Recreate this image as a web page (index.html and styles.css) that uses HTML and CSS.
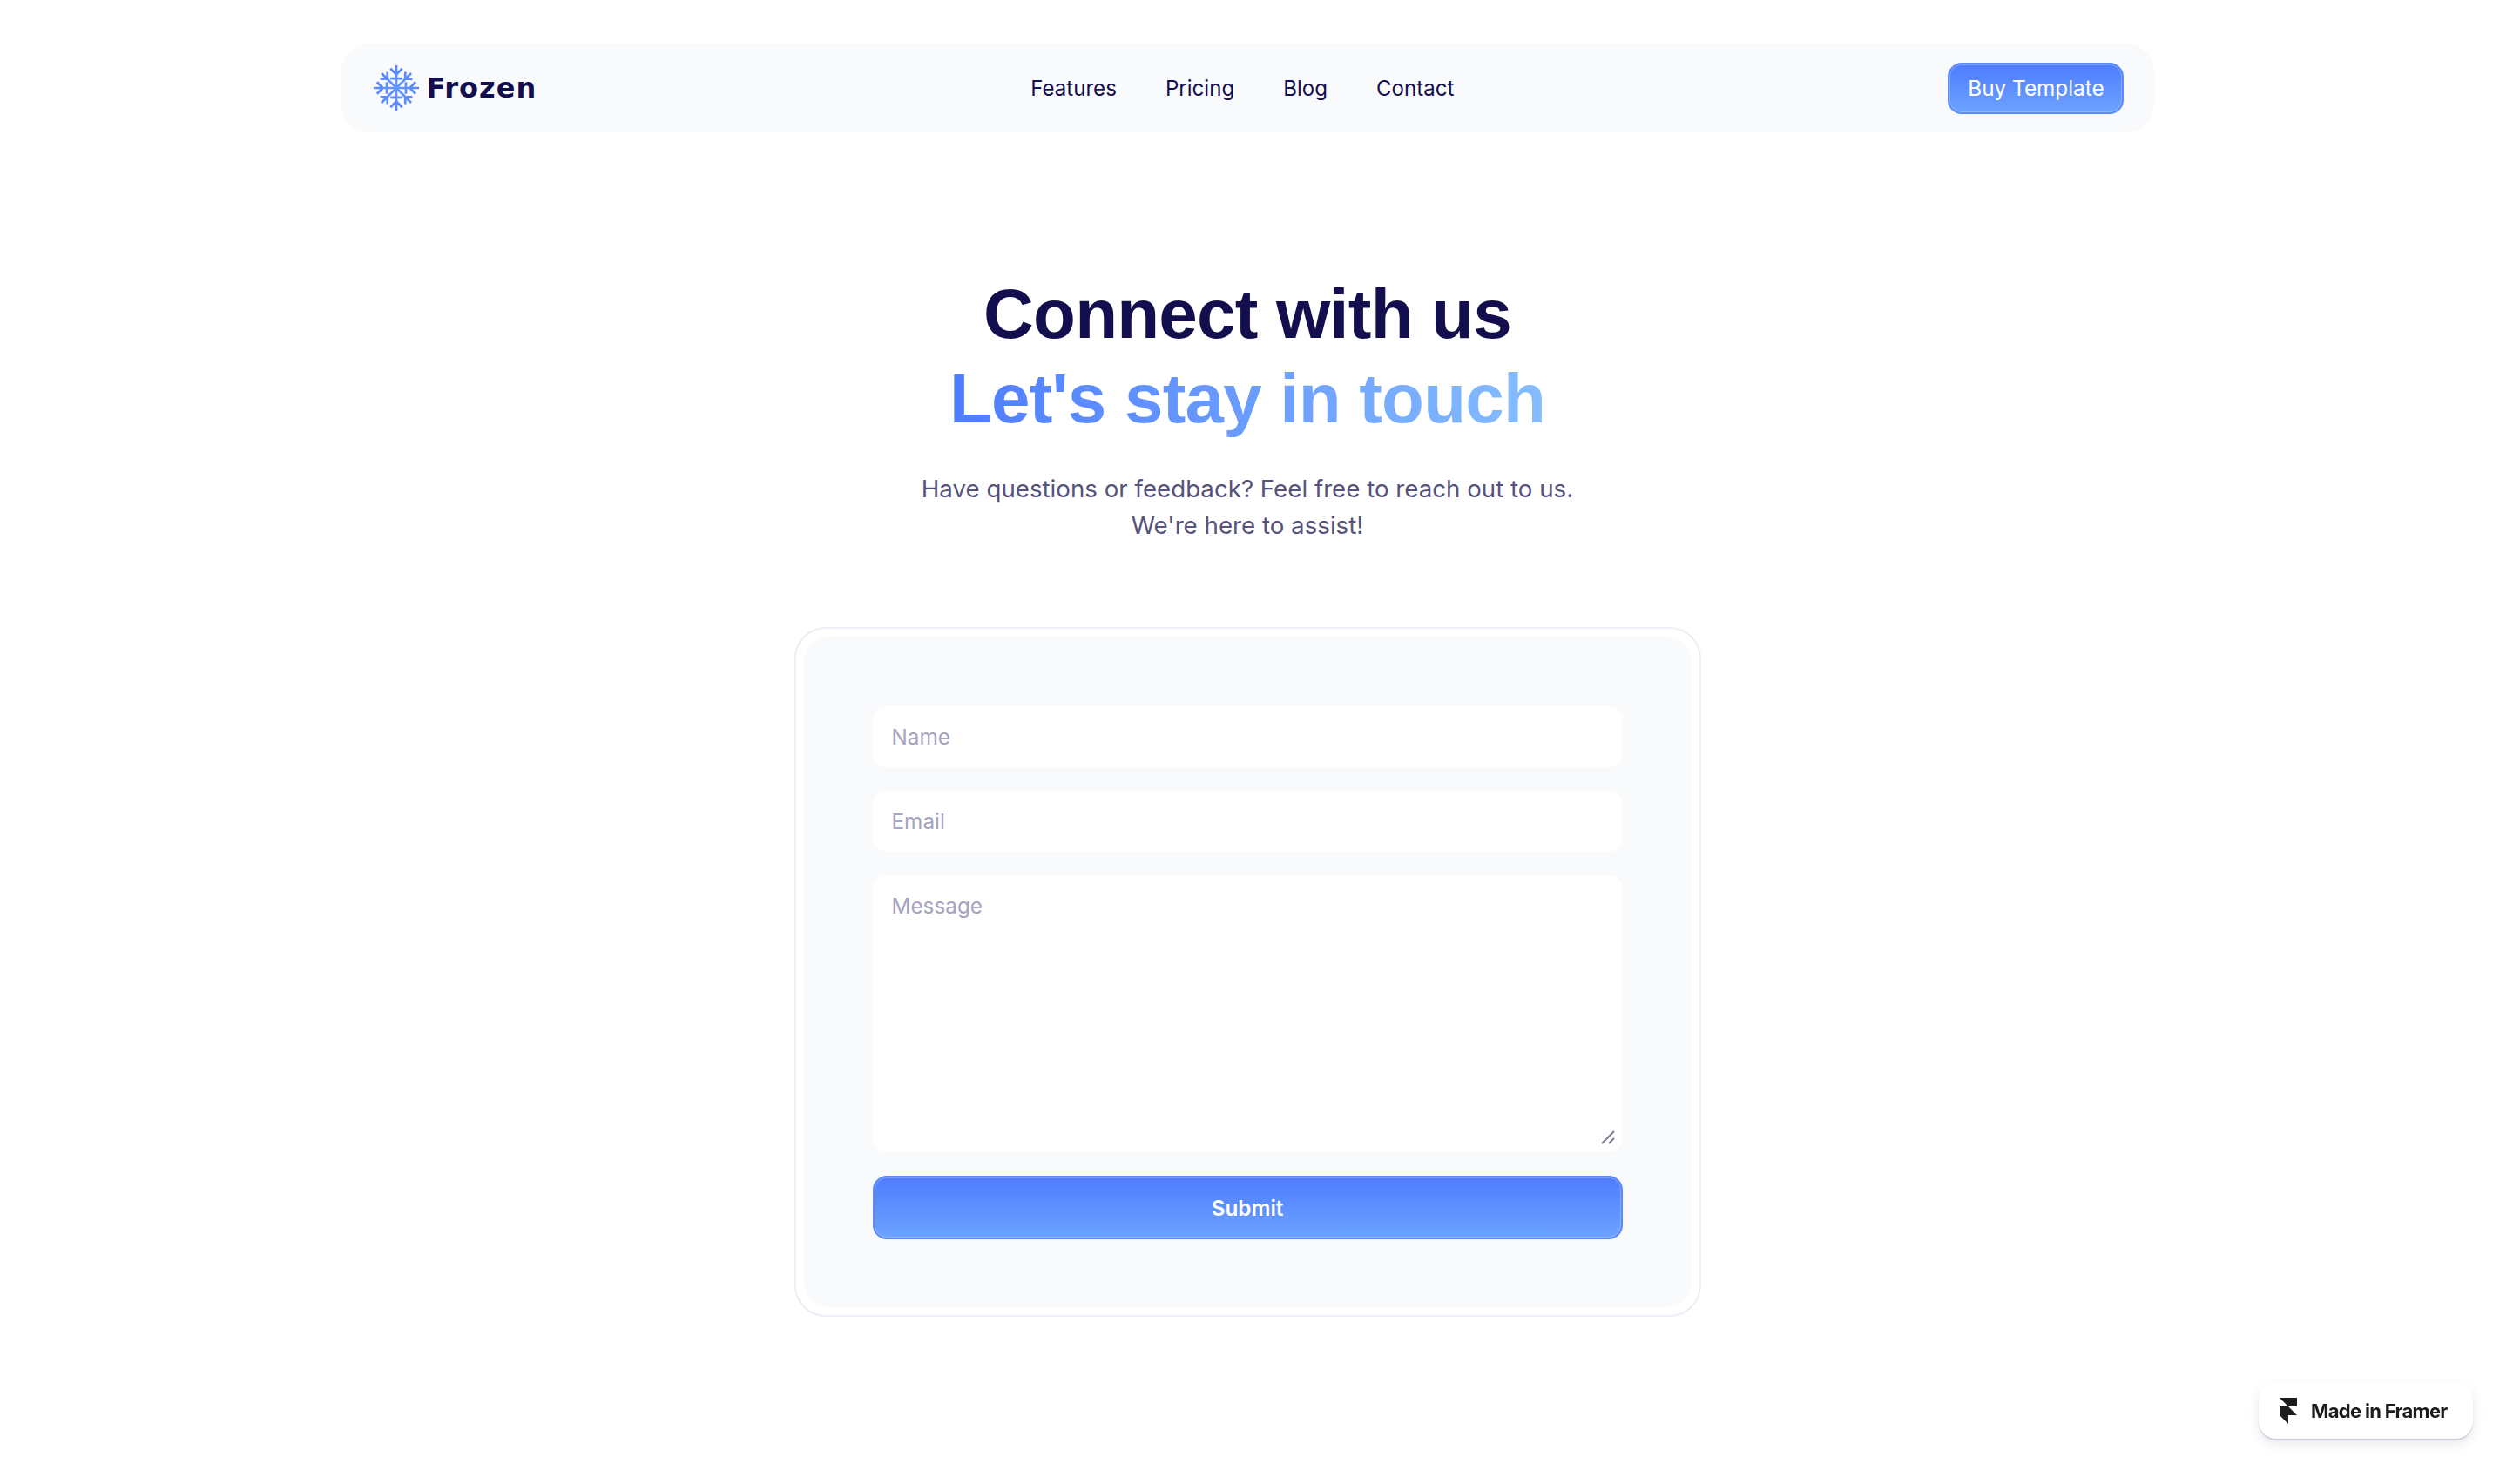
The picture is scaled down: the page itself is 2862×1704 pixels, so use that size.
FILE: index.html
```html
<!DOCTYPE html>
<html lang="en">

<head>
  <meta charset="UTF-8">
  <meta name="viewport" content="width=device-width, initial-scale=1.0">
  <title>Frozen - Contact</title>
  <link rel="stylesheet" href="styles.css">
</head>

<body>
  <div class="container">
    <nav class="navbar">
      <a class="logo" href="#">
        <svg class="logoIcon" viewBox="-28 -28 56 56" fill="none" stroke="url(#flake)" stroke-width="2.8">
          <defs>
            <linearGradient id="flake" gradientUnits="userSpaceOnUse" x1="-20" y1="-28" x2="20" y2="28">
              <stop offset="0" stop-color="#4f7cff" />
              <stop offset="1" stop-color="#7ab2ff" />
            </linearGradient>
            <path id="spoke" d="M0 0V-27M-7 -23L0 -16L7 -23" />
            <path id="spokeShort" d="M0 0V-25M-6 -21L0 -15L6 -21M-8 -8L-3 -13M8 -8L3 -13" />
          </defs>
          <use href="#spoke" />
          <use href="#spokeShort" transform="rotate(45)" />
          <use href="#spoke" transform="rotate(90)" />
          <use href="#spokeShort" transform="rotate(135)" />
          <use href="#spoke" transform="rotate(180)" />
          <use href="#spokeShort" transform="rotate(225)" />
          <use href="#spoke" transform="rotate(270)" />
          <use href="#spokeShort" transform="rotate(315)" />
        </svg>
        <span>Frozen</span>
      </a>
      <div class="links">
        <a href="#">Features</a>
        <a href="#">Pricing</a>
        <a href="#">Blog</a>
        <a href="#">Contact</a>
      </div>
      <a class="buyBtn" href="#">Buy Template</a>
    </nav>

    <div class="hero">
      <h1>Connect with us<br><span class="gradientText">Let's stay in touch</span></h1>
      <p>Have questions or feedback? Feel free to reach out to us.<br>We're here to assist!</p>
    </div>

    <div class="formFrame">
      <form class="contactForm">
        <input type="text" placeholder="Name">
        <input type="email" placeholder="Email">
        <div class="messageBox">
          <textarea placeholder="Message"></textarea>
          <svg class="resizeGrip" viewBox="0 0 16 16" fill="none" stroke="#7d7a92" stroke-width="2">
            <path d="M1 15L15 1M9 15L15 9" />
          </svg>
        </div>
        <button type="button" class="submitBtn">Submit</button>
      </form>
    </div>
  </div>

  <a class="framerBadge" href="#">
    <svg viewBox="0 0 14 21" width="20" height="30" fill="#1c1c1e">
      <path d="M0 0H14V7H7ZM0 7H7L14 14H7V21L0 14Z" />
    </svg>
    <span>Made in Framer</span>
  </a>
</body>

</html>
```

FILE: styles.css
```css
* {
  padding: 0;
  margin: 0;
  box-sizing: border-box;
}

body {
  background-color: #ffffff;
  font-family: "Inter", "Liberation Sans", sans-serif;
  color: #130f4f;
}

a {
  text-decoration: none;
  color: inherit;
}

.container {
  display: flex;
  flex-direction: column;
  align-items: center;
  padding: 50px 0 0 2px;
}

.navbar {
  width: 2081px;
  height: 102px;
  display: flex;
  align-items: center;
  justify-content: space-between;
  padding: 0 34px 0 36px;
  background-color: #f9fafc;
  border-radius: 32px;
}

.logo {
  display: flex;
  align-items: center;
  gap: 8px;
  font-family: "DejaVu Sans", sans-serif;
  font-weight: 700;
  font-size: 32px;
  letter-spacing: 1px;
  color: #130f4f;
}

.logoIcon {
  width: 54px;
  height: 54px;
}

.links {
  display: flex;
  gap: 56px;
  font-size: 24.1px;
}

.buyBtn {
  width: 202px;
  height: 59px;
  display: flex;
  align-items: center;
  justify-content: center;
  font-size: 24.3px;
  color: #ffffff;
  border: 2px solid #5a8bf8;
  border-radius: 16px;
  background: linear-gradient(180deg, #4f7cff, #6ca3ff);
  box-shadow: inset 0 0 0 1px rgba(255, 255, 255, 0.25);
}

.hero {
  margin-top: 160px;
  text-align: center;
}

.hero h1 {
  font-family: "Liberation Sans", sans-serif;
  font-weight: 700;
  font-size: 80px;
  line-height: 97px;
  letter-spacing: -0.8px;
  color: #130f4f;
}

.gradientText {
  background: linear-gradient(90deg, #4f7cff, #85bdff);
  background-clip: text;
  -webkit-background-clip: text;
  color: transparent;
}

.hero p {
  margin-top: 34px;
  font-size: 27.7px;
  line-height: 42px;
  color: #55537c;
}

.formFrame {
  margin-top: 96px;
  width: 1041px;
  padding: 9px;
  border: 2px solid #eeeef6;
  border-radius: 36px;
}

.contactForm {
  display: flex;
  flex-direction: column;
  gap: 27px;
  padding: 80px 79px 78px;
  background-color: #f9fafc;
  border-radius: 28px;
}

.contactForm input,
.contactForm textarea {
  display: block;
  width: 100%;
  border: none;
  outline: none;
  padding: 0 22px;
  font-family: "Inter", "Liberation Sans", sans-serif;
  font-size: 24.3px;
  background-color: #ffffff;
  border-radius: 16px;
  color: #130f4f;
}

.contactForm input {
  height: 70px;
}

.contactForm textarea {
  height: 318px;
  padding-top: 20px;
  resize: none;
}

.contactForm ::placeholder {
  color: #a5a3bf;
  opacity: 1;
}

.messageBox {
  position: relative;
}

.resizeGrip {
  position: absolute;
  right: 9px;
  bottom: 9px;
  width: 16px;
  height: 16px;
}

.submitBtn {
  height: 73px;
  width: 100%;
  border: 2px solid #5a8bf8;
  border-radius: 16px;
  background: linear-gradient(180deg, #4f7cff, #6ca3ff);
  box-shadow: inset 0 0 0 1px rgba(255, 255, 255, 0.25);
  color: #ffffff;
  font-family: "Inter", "Liberation Sans", sans-serif;
  font-weight: 600;
  font-size: 24.3px;
}

/* floats over the page, bottom right */
.framerBadge {
  position: fixed;
  right: 23px;
  bottom: 52px;
  width: 246px;
  height: 64px;
  display: flex;
  align-items: center;
  gap: 16px;
  padding-left: 24px;
  background-color: #ffffff;
  border-radius: 20px;
  box-shadow: 0 2px 1px rgba(40, 40, 90, 0.16), 0 6px 14px rgba(40, 40, 90, 0.1);
  font-weight: 700;
  font-size: 22px;
  letter-spacing: -0.7px;
  color: #1c1c1e;
}
```
